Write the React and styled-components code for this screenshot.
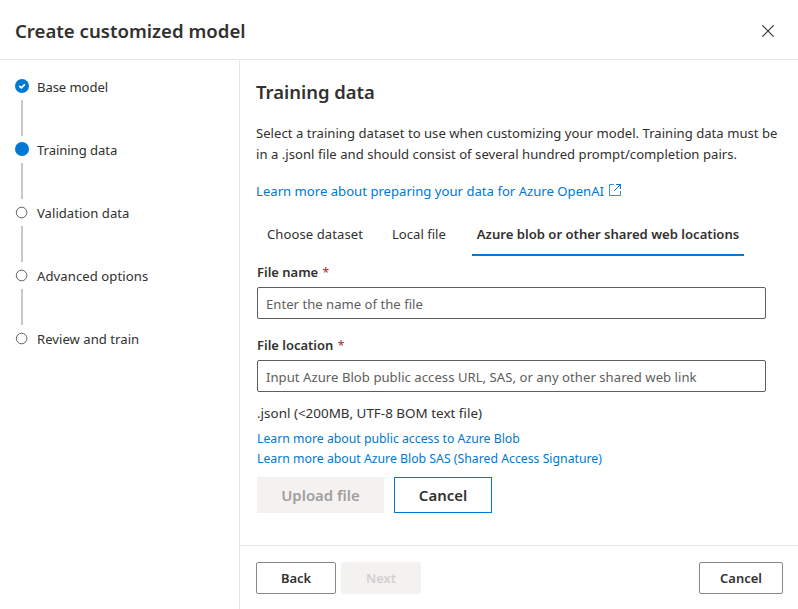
import React from 'react';
import styled, { createGlobalStyle, css } from 'styled-components';

const GlobalStyle = createGlobalStyle`
  * { box-sizing: border-box; }
  body {
    margin: 0;
    background: #fff;
    color: #323130;
    font: 400 13.1px/20px "Noto Sans", "Open Sans", sans-serif;
  }
  h1, h2, p { margin: 0; }
  a { color: #0078d4; text-decoration: none; }
  button, input { font: inherit; color: inherit; letter-spacing: inherit; }
`;

const Panel = styled.div`
  display: flex;
  flex-direction: column;
  width: 798px;
  height: 609px;
  overflow: hidden;
  white-space: nowrap;
`;

const Header = styled.header`
  display: flex;
  flex: none;
  align-items: center;
  justify-content: space-between;
  height: 60px;
  padding: 3px 24px 0 15px;
  border-bottom: 1px solid #e6e6e6;
`;

const Title = styled.h1`
  font-size: 18.6px;
  font-weight: 600;
  line-height: 26px;
`;

const CloseButton = styled.button`
  display: flex;
  padding: 0;
  border: 0;
  background: none;
`;

const Body = styled.div`
  display: flex;
  flex: 1;
  min-height: 0;
`;

const Steps = styled.nav`
  display: flex;
  flex: none;
  flex-direction: column;
  width: 240px;
  padding: 17px 0 0 15px;
  border-right: 1px solid #e6e6e6;
`;

const Step = styled.div`
  display: grid;
  grid-template-columns: 14px 1fr;
  grid-template-rows: 20px 36px;
  column-gap: 8px;
  row-gap: 3px;
  height: 63px;
  letter-spacing: ${(p) => p.$spacing}px;
`;

const Marker = styled.span`
  display: flex;
  justify-content: center;
  padding-top: 2px;
`;

const Connector = styled.span`
  width: 2px;
  margin-left: 6px;
  background: #c8c8c8;
`;

const Main = styled.main`
  display: flex;
  flex: 1;
  flex-direction: column;
`;

const Content = styled.section`
  flex: 1;
  padding: 20px 16px 0;
`;

const Heading = styled.h2`
  font-size: 18.45px;
  font-weight: 600;
  line-height: 24px;
`;

const Description = styled.p`
  margin-top: 19px;
  line-height: 21px;
`;

const Line = styled.span`
  display: block;
  letter-spacing: ${(p) => p.$spacing}px;
`;

const DocLink = styled.a`
  display: flex;
  align-items: center;
  gap: 5px;
  margin-top: 16px;
  letter-spacing: 0.015px;

  svg { margin-bottom: 2px; }
`;

const Tabs = styled.div`
  display: flex;
  gap: 19px;
  margin-top: 11px;
  padding-left: 6px;
`;

const Tab = styled.div`
  height: 44px;
  padding: 12px 5px 0;
  border-bottom: 2px solid transparent;
  letter-spacing: ${(p) => p.$spacing || 0}px;
  ${(p) => p.$active && css`
    margin-left: 2px;
    border-color: #0078d4;
    font-weight: 600;
  `}
`;

const Form = styled.div`
  padding: 6px 15px 0 1px;
`;

const Field = styled.label`
  display: block;
  margin-bottom: 16px;
`;

const FieldLabel = styled.span`
  display: block;
  height: 20px;
  font-size: 12.97px;
  font-weight: 600;
`;

const Required = styled.span`
  color: #a4262c;
  font-weight: 400;
  font-size: 12px;
  padding-left: 1px;
`;

const TextInput = styled.input`
  display: block;
  width: 509px;
  height: 32px;
  margin-top: 5px;
  padding: 2px 8px 0;
  border: 1px solid #605e5c;
  border-radius: 2px;
  background: #fff;
  letter-spacing: ${(p) => p.$spacing}px;
  &::placeholder { color: #605e5c; opacity: 1; }
`;

const Hint = styled.p`
  margin: -5px 0 6px;
  font-size: 13.44px;
`;

const HelpLink = styled.a`
  display: block;
  font-size: 12.27px;
`;

const UploadActions = styled.div`
  display: flex;
  gap: 10px;
  margin-top: 8px;
`;

const UploadButton = styled.button`
  width: ${(p) => p.$width}px;
  height: 36px;
  padding: 0;
  border: 1px solid ${(p) => (p.disabled ? '#f3f2f1' : '#0078d4')};
  background: ${(p) => (p.disabled ? '#f3f2f1' : '#fff')};
  color: ${(p) => (p.disabled ? '#a19f9d' : '#323130')};
  font-size: 14.95px;
  font-weight: 600;
`;

const Footer = styled.footer`
  display: flex;
  flex: none;
  gap: 5px;
  height: 64px;
  padding: 16px 15px 0 16px;
  border-top: 1px solid #e6e6e6;
`;

const FooterButton = styled.button`
  width: ${(p) => p.$width}px;
  height: 32px;
  padding: 0;
  border: 1px solid ${(p) => (p.disabled ? '#f3f2f1' : '#8a8886')};
  border-radius: 2px;
  background: ${(p) => (p.disabled ? '#f3f2f1' : '#fff')};
  color: ${(p) => (p.disabled ? '#d2d0ce' : '#323130')};
  font-size: 12.95px;
  font-weight: 600;
  ${(p) => p.$end && 'margin-left: auto;'}
`;

function StepIcon({ state }) {
  if (state === 'todo') {
    return (
      <svg width="14" height="14" viewBox="0 0 14 14">
        <circle cx="6.6" cy="7.5" r="5.3" fill="none" stroke="#605e5c" />
      </svg>
    );
  }
  return (
    <svg width="14" height="14" viewBox="0 0 14 14">
      <circle cx="7" cy="7" r="7" fill="#0078d4" />
      {state === 'done' && (
        <path d="M4.3 7l2 1.8 3.6-3.5" fill="none" stroke="#fff" strokeWidth="1.7" />
      )}
    </svg>
  );
}

const steps = [
  { label: 'Base model', state: 'done', spacing: -0.09 },
  { label: 'Training data', state: 'current', spacing: -0.06 },
  { label: 'Validation data', state: 'todo', spacing: 0.02 },
  { label: 'Advanced options', state: 'todo', spacing: 0.08 },
  { label: 'Review and train', state: 'todo', spacing: 0.03 },
];

export default function App() {
  return (
    <>
      <GlobalStyle />
      <Panel>
        <Header>
          <Title>Create customized model</Title>
          <CloseButton aria-label="Close">
            <svg width="12" height="12" viewBox="0 0 12 12">
              <path d="M0.3 0.3l11.4 11.4M11.7 0.3L0.3 11.7" stroke="#323130" strokeWidth="1.1" />
            </svg>
          </CloseButton>
        </Header>
        <Body>
          <Steps>
            {steps.map((s, i) => (
              <Step key={s.label} $spacing={s.spacing}>
                <Marker><StepIcon state={s.state} /></Marker>
                <span>{s.label}</span>
                {i < steps.length - 1 && <Connector />}
              </Step>
            ))}
          </Steps>
          <Main>
            <Content>
              <Heading>Training data</Heading>
              <Description>
                <Line $spacing={0.02}>Select a training dataset to use when customizing your model. Training data must be</Line>
                <Line $spacing={0.03}>in a .jsonl file and should consist of several hundred prompt/completion pairs.</Line>
              </Description>
              <DocLink href="#">
                Learn more about preparing your data for Azure OpenAI
                <svg width="12" height="12" viewBox="0 0 12 12" fill="none" stroke="#0078d4">
                  <path d="M5 0.5H0.5V11.5H11.5V7" strokeWidth="0.8" />
                  <path d="M7 0.5H11.5V5M11.5 0.5L5.2 6.8" />
                </svg>
              </DocLink>
              <Tabs>
                <Tab $spacing={0.06}>Choose dataset</Tab>
                <Tab>Local file</Tab>
                <Tab $active>Azure blob or other shared web locations</Tab>
              </Tabs>
              <Form>
                <Field>
                  <FieldLabel>File name <Required>*</Required></FieldLabel>
                  <TextInput $spacing={0.015} placeholder="Enter the name of the file" />
                </Field>
                <Field>
                  <FieldLabel>File location <Required>*</Required></FieldLabel>
                  <TextInput $spacing={0.045} placeholder="Input Azure Blob public access URL, SAS, or any other shared web link" />
                </Field>
                <Hint>.jsonl (&lt;200MB, UTF-8 BOM text file)</Hint>
                <HelpLink href="#">Learn more about public access to Azure Blob</HelpLink>
                <HelpLink href="#">Learn more about Azure Blob SAS (Shared Access Signature)</HelpLink>
                <UploadActions>
                  <UploadButton $width={127} disabled>Upload file</UploadButton>
                  <UploadButton $width={98}>Cancel</UploadButton>
                </UploadActions>
              </Form>
            </Content>
            <Footer>
              <FooterButton $width={80}>Back</FooterButton>
              <FooterButton $width={80} disabled>Next</FooterButton>
              <FooterButton $width={84} $end>Cancel</FooterButton>
            </Footer>
          </Main>
        </Body>
      </Panel>
    </>
  );
}
